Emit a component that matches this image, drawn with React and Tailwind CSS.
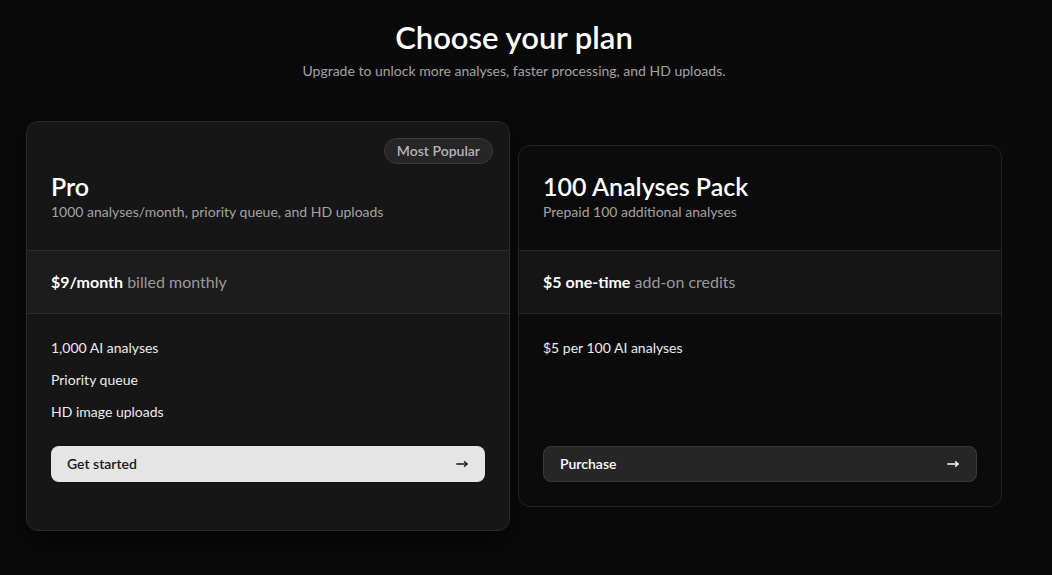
const plans = [
  {
    id: 'pro',
    name: 'Pro',
    description: '1000 analyses/month, priority queue, and HD uploads',
    price: '$9/month',
    priceNote: 'billed monthly',
    features: ['1,000 AI analyses', 'Priority queue', 'HD image uploads'],
    cta: 'Get started',
    popular: true,
  },
  {
    id: 'pack',
    name: '100 Analyses Pack',
    description: 'Prepaid 100 additional analyses',
    price: '$5 one-time',
    priceNote: 'add-on credits',
    features: ['$5 per 100 AI analyses'],
    cta: 'Purchase',
    popular: false,
  },
];

function Arrow() {
  return (
    <svg width="12" height="8" viewBox="0 0 12 8" fill="none" stroke="currentColor" strokeWidth="1.4" strokeLinecap="round" strokeLinejoin="round">
      <path d="M0.8 4H11" />
      <path d="M8.6 1.8L11 4L8.6 6.2" />
    </svg>
  );
}

function PlanCard({ plan }) {
  return (
    <div
      className={`relative flex flex-col rounded-xl border ${
        plan.popular
          ? '-my-6 py-6 bg-[#161616] border-[#2a2a2a] shadow-[0_10px_30px_rgba(0,0,0,0.6)]'
          : 'bg-[#0b0b0b] border-[#222222]'
      }`}
    >
      {plan.popular && (
        <span className="absolute top-4 right-4 rounded-full border border-[#3a3a3a] bg-[#262626] px-3 py-[2px] text-sm font-semibold text-[#b5b5b5]">
          Most Popular
        </span>
      )}

      {/* Header */}
      <div className="px-6 pt-6 pb-[28px]">
        <h2 className="text-[25px] font-semibold text-white leading-8">{plan.name}</h2>
        <p className="text-sm text-[#a3a3a3]">{plan.description}</p>
      </div>

      {/* Price */}
      <div
        className={`flex h-[64px] items-center border-y px-6 ${
          plan.popular ? 'bg-[#1c1c1c] border-[#2c2c2c]' : 'bg-[#151515] border-[#262626]'
        }`}
      >
        <p className="text-base">
          <span className="font-bold text-white">{plan.price}</span>{' '}
          <span className="text-[#9a9a9a]">{plan.priceNote}</span>
        </p>
      </div>

      {/* Features */}
      <ul className="flex-1 space-y-3 px-6 pt-6">
        {plan.features.map(f => (
          <li key={f} className="text-sm text-[#ececec]">{f}</li>
        ))}
      </ul>

      {/* Button */}
      <div className="px-6 pt-6 pb-6">
        <button
          className={`flex h-9 w-full items-center justify-between rounded-lg pl-4 pr-[17px] text-sm font-semibold ${
            plan.popular
              ? 'bg-[#e5e5e5] text-[#171717]'
              : 'border border-[#3a3a3a] bg-[#262626] text-white'
          }`}
        >
          <span>{plan.cta}</span>
          <Arrow />
        </button>
      </div>
    </div>
  );
}

export default function App() {
  return (
    <div
      className="min-h-[575px] w-full bg-[#0a0a0a]"
      style={{ fontFamily: 'Lato, "Noto Sans", sans-serif' }}
    >
      <div className="w-[1028px] px-[26px] pt-[19px]">
        <div className="text-center">
          <h1 className="text-[31px] leading-9 font-semibold text-white">Choose your plan</h1>
          <p className="mt-1.5 text-sm text-[#a3a3a3]">
            Upgrade to unlock more analyses, faster processing, and HD uploads.
          </p>
        </div>

        <div className="mt-16 grid grid-cols-2 gap-2">
          {plans.map(p => (
            <PlanCard key={p.id} plan={p} />
          ))}
        </div>
      </div>
    </div>
  );
}
